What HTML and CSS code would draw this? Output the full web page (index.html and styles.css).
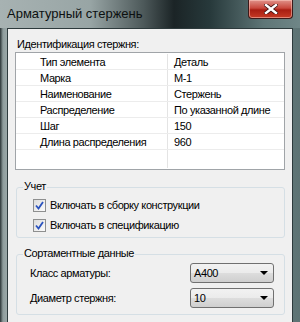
FILE: index.html
```html
<!DOCTYPE html>
<html>

<head>
    <title>Арматурный стержень</title>
    <link rel="stylesheet" href="styles.css">
</head>

<body>
    <div class="window">
        <div class="titleBar">
            <span class="titleText">Арматурный стержень</span>
            <div class="closeButton">
                <svg width="14" height="10" viewBox="0 0 14 10">
                    <path d="M2 1 L12 9 M12 1 L2 9" stroke="#3a1010" stroke-width="4" stroke-linecap="square"/>
                    <path d="M2 1 L12 9 M12 1 L2 9" stroke="#fff" stroke-width="2.4" stroke-linecap="square"/>
                </svg>
            </div>
        </div>

        <div class="frame">
            <div class="client">
                <div class="sectionLabel">Идентификация стержня:</div>
                <div class="listView">
                    <div class="listRow"><span class="colName">Тип элемента</span><span class="colValue">Деталь</span></div>
                    <div class="listRow"><span class="colName">Марка</span><span class="colValue">М-1</span></div>
                    <div class="listRow"><span class="colName">Наименование</span><span class="colValue">Стержень</span></div>
                    <div class="listRow"><span class="colName">Распределение</span><span class="colValue">По указанной длине</span></div>
                    <div class="listRow"><span class="colName">Шаг</span><span class="colValue">150</span></div>
                    <div class="listRow"><span class="colName">Длина распределения</span><span class="colValue">960</span></div>
                    <div class="listRow listRow--empty"><span class="colName"></span><span class="colValue"></span></div>
                </div>

                <div class="groupBox groupBox--account">
                    <span class="groupLabel">Учет</span>
                    <label class="checkRow"><span class="checkBox"><svg width="9" height="9" viewBox="0 0 9 9"><path d="M1 4.5 L3.5 7.5 L8 1" fill="none" stroke="#2a52be" stroke-width="1.8"/></svg></span>Включать в сборку конструкции</label>
                    <label class="checkRow"><span class="checkBox"><svg width="9" height="9" viewBox="0 0 9 9"><path d="M1 4.5 L3.5 7.5 L8 1" fill="none" stroke="#2a52be" stroke-width="1.8"/></svg></span>Включать в спецификацию</label>
                </div>

                <div class="groupBox groupBox--assort">
                    <span class="groupLabel">Сортаментные данные</span>
                    <div class="fieldRow">
                        <span class="fieldLabel">Класс арматуры:</span>
                        <div class="comboBox"><span>A400</span><span class="comboArrow"></span></div>
                    </div>
                    <div class="fieldRow">
                        <span class="fieldLabel">Диаметр стержня:</span>
                        <div class="comboBox"><span>10</span><span class="comboArrow"></span></div>
                    </div>
                </div>
            </div>
        </div>
    </div>
</body>

</html>
```

FILE: styles.css
```css
body {
    margin: 0;
    font-family: 'Liberation Sans', Arial, sans-serif;
    font-size: 11px;
    letter-spacing: -0.4px;
    color: #000;
    overflow: hidden;
}

.window {
    width: 300px;
    height: 322px;
    display: flex;
    flex-direction: column;
    background: linear-gradient(to right, #2a3335 0px, #8e9c9c 3px, #9aa7a7 7px, #8a9a9a 40%, #5d7374 100%);
}

.titleBar {
    height: 28px;
    flex-shrink: 0;
    display: flex;
    align-items: flex-start;
    justify-content: space-between;
    background: linear-gradient(to right, #a7b2b2 0%, #98a5a5 30%, #4c5859 48%, #1b2426 58%, #27393b 70%, #5f7677 88%, #6f8687 100%);
}

.titleText {
    padding: 6px 0 0 7px;
    font-size: 13px;
    letter-spacing: 0;
    color: #0c1010;
}

.closeButton {
    width: 43px;
    height: 18px;
    margin-right: 7px;
    display: flex;
    align-items: center;
    justify-content: center;
    border: 1px solid #3c1a1a;
    border-top: none;
    border-radius: 0 0 4px 4px;
    background: linear-gradient(to bottom, #e0928a 0%, #c8473c 45%, #a81d12 55%, #c63a25 100%);
    box-shadow: inset 0 0 0 1px rgba(255, 210, 200, 0.5);
}

.frame {
    flex: 1;
    min-height: 0;
    padding: 0 7px 0 7px;
}

.client {
    height: 100%;
    box-sizing: border-box;
    background-color: #f0f0f0;
    border: 1px solid #2d3a3c;
    border-bottom: none;
    padding: 8px 7px 0 7px;
}

.sectionLabel {
    padding-left: 2px;
    height: 15px;
    line-height: 15px;
}

.listView {
    height: 118px;
    box-sizing: border-box;
    background-color: #fff;
    border: 1px solid #a0a4a8;
    padding-top: 1px;
}

.listRow {
    display: flex;
    height: 16px;
    line-height: 16px;
    border-bottom: 1px solid #ececec;
    box-sizing: border-box;
}

.listRow--empty {
    height: 18px;
    border-bottom: none;
}

.colName {
    width: 152px;
    padding-left: 24px;
    box-sizing: border-box;
    border-right: 1px solid #e4e4e4;
    white-space: nowrap;
}

.colValue {
    padding-left: 6px;
    white-space: nowrap;
}

.groupBox {
    position: relative;
    border: 1px solid #d5dfe5;
    border-radius: 3px;
    margin-left: 1px;
    box-sizing: border-box;
}

.groupBox--account {
    margin-top: 17px;
    height: 51px;
    padding: 7px 0 0 16px;
}

.groupBox--assort {
    margin-top: 16px;
    height: 61px;
    padding: 5px 10px 0 13px;
}

.groupLabel {
    position: absolute;
    top: -8px;
    left: 6px;
    padding: 0 1px;
    background-color: #f0f0f0;
}

.checkRow {
    display: flex;
    align-items: center;
    height: 20px;
    white-space: nowrap;
}

.checkBox {
    width: 11px;
    height: 11px;
    margin-right: 4px;
    display: flex;
    align-items: center;
    justify-content: center;
    border: 1px solid #8e8f8f;
    background: linear-gradient(to bottom right, #dcdcdc, #fbfbfb);
}

.fieldRow {
    display: flex;
    align-items: center;
    justify-content: space-between;
    height: 25px;
}

.fieldLabel {
    padding-top: 1px;
}

.comboBox {
    width: 84px;
    height: 20px;
    box-sizing: border-box;
    display: flex;
    align-items: center;
    justify-content: space-between;
    padding: 0 5px 0 3px;
    border: 1px solid #707070;
    border-radius: 3px;
    background: linear-gradient(to bottom, #f2f2f2 0%, #ebebeb 50%, #dddddd 51%, #cfcfcf 100%);
}

.comboArrow {
    width: 0;
    height: 0;
    border-left: 4px solid transparent;
    border-right: 4px solid transparent;
    border-top: 4px solid #000;
}
```
